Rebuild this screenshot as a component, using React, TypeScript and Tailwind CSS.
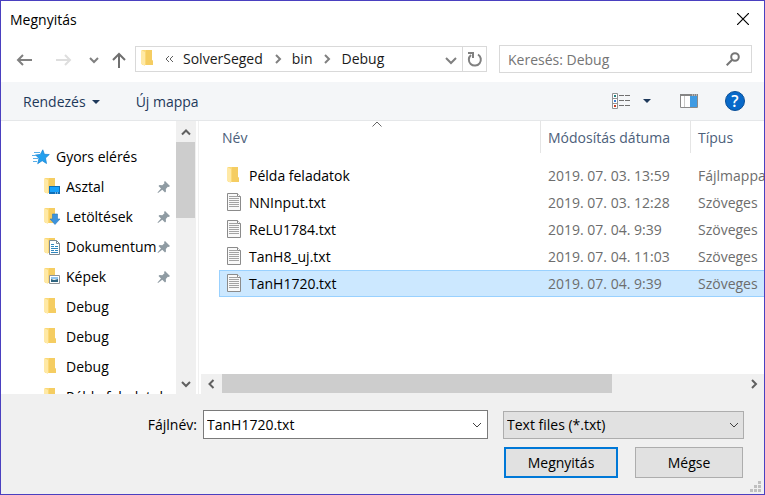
import React from 'react';

type Overlay = 'desktop' | 'download' | 'document' | 'picture' | 'none';

const places: { name: string; overlay: Overlay }[] = [
  { name: 'Asztal', overlay: 'desktop' },
  { name: 'Letöltések', overlay: 'download' },
  { name: 'Dokumentum', overlay: 'document' },
  { name: 'Képek', overlay: 'picture' },
  { name: 'Debug', overlay: 'none' },
  { name: 'Debug', overlay: 'none' },
  { name: 'Debug', overlay: 'none' },
  { name: 'Példa feladatok', overlay: 'none' },
];

const files = [
  { name: 'Példa feladatok', date: '2019. 07. 03. 13:59', type: 'Fájlmappa', folder: true },
  { name: 'NNInput.txt', date: '2019. 07. 03. 12:28', type: 'Szöveges' },
  { name: 'ReLU1784.txt', date: '2019. 07. 04. 9:39', type: 'Szöveges' },
  { name: 'TanH8_uj.txt', date: '2019. 07. 04. 11:03', type: 'Szöveges' },
  { name: 'TanH1720.txt', date: '2019. 07. 04. 9:39', type: 'Szöveges', selected: true },
];

function Folder({ overlay = 'none' }: { overlay?: Overlay }) {
  return (
    <svg width="18" height="18" viewBox="1 1 18 18" className="shrink-0" aria-hidden="true">
      <path d="M2 1h10v10l1 1v4H2z" fill="#fbd977" />
      <path d="M6 1h6v10l1 1v4H6z" fill="#f5cd62" />
      <path d="M1 1l4 2v14l-4-2z" fill="#ffe9a6" />
      {overlay === 'desktop' && (
        <>
          <path d="M6 9h11v8H6z" fill="#0f6fb8" />
          <path d="M7 10h9v5H7z" fill="#18a2fb" />
          <path d="M12 16h1M14 16h1" stroke="#d5ecfb" />
        </>
      )}
      {overlay === 'download' && (
        <path d="M9.500 7h5v5h2.500L12 17.500 7 12h2.500z" fill="#3c93dc" stroke="#2a78bd" strokeWidth=".6" />
      )}
      {overlay === 'document' && (
        <>
          <path d="M6.500 3.500h7l3 3v11h-10z" fill="#fff" stroke="#7d8a93" />
          <path d="M13.500 3.500v3h3" fill="none" stroke="#7d8a93" />
          <path d="M8 7.500h3M8 9.500h3M12 9.500h3M8 11.500h7M8 13.500h3M8 15.500h7M12 13.500h3" stroke="#3187bd" />
        </>
      )}
      {overlay === 'picture' && (
        <>
          <path d="M6.500 8.500h10v8h-10z" fill="#fff" stroke="#8e9498" />
          <path d="M8 10h7v2H8z" fill="#8fc4ee" />
          <path d="M8 12l3 1 4-1v3H8z" fill="#2e6580" />
        </>
      )}
    </svg>
  );
}

function TextFile() {
  return (
    <svg width="18" height="20" viewBox="0 0 18 20" className="shrink-0" aria-hidden="true">
      <path d="M.5.5h10l3 3v14H.5z" fill="#f9f9f9" stroke="#8b8b8b" />
      <path d="M10.500.5v3h3" fill="#fff" stroke="#8b8b8b" />
      <path d="M2 3.500h8M2 5.500h10M2 7.500h10M2 9.500h10M2 11.500h10M2 13.500h10" stroke="#a3a3a3" />
    </svg>
  );
}

function Pin() {
  return (
    <svg width="14" height="14" viewBox="0 0 14 14" className="shrink-0" aria-hidden="true">
      <path d="M8 1l5 5-1.200 1-1-.3-2 2.300.2 2.500L8 12.500 5.300 9.800 1 13l-.5-.5L4 8.500 1.500 6l1-1 2.800.2 2.200-2L7 2z" fill="#8f9ba3" />
    </svg>
  );
}

function QuickStar() {
  return (
    <svg width="18" height="16" viewBox="0 0 18 16" className="shrink-0" aria-hidden="true">
      <path d="M10.800.8l1.600 4.500 4.900.2-3.800 3.500 1 5.500-4.300-2.800-4.500 3 1.300-5.300L3.600 6l4.700-.6z" fill="#23a0ee" stroke="#1681d2" strokeWidth=".7" />
      <path d="M2 3.500h6M0 6.500h4M1 9.500h5M1 12.500h4" stroke="#58aee8" />
    </svg>
  );
}

type Dir = 'up' | 'down' | 'left' | 'right';
const chevrons: Record<Dir, string> = {
  up: 'M2 8.500L6 4.500l4 4',
  down: 'M2 4l4 4 4-4',
  left: 'M8.500 2l-4 4 4 4',
  right: 'M4 2l4 4-4 4',
};

function Chevron({ dir, className, weight = 2 }: { dir: Dir; className?: string; weight?: number }) {
  return (
    <svg width="12" height="12" viewBox="0 0 12 12" className={className} fill="none" stroke="currentColor" strokeWidth={weight} aria-hidden="true">
      <path d={chevrons[dir]} />
    </svg>
  );
}

function Crumb() {
  return (
    <svg width="12" height="12" viewBox="0 0 12 12" className="mr-2 ml-[9px]" fill="none" stroke="#808080" strokeWidth="2" aria-hidden="true">
      <path d="M4 2l4 4-4 4" />
    </svg>
  );
}

function Caret() {
  return (
    <svg width="8" height="4" viewBox="0 0 8 4" aria-hidden="true">
      <path d="M0 0h8L4 4z" fill="#1e395b" />
    </svg>
  );
}

function NavBar() {
  return (
    <nav className="flex h-[45px] items-center pr-3 pb-px pl-[15px] text-[#808080]">
      <button aria-label="Vissza" className="w-4 pt-0.5">
        <svg width="16" height="12" viewBox="0 0 16 12" fill="none" stroke="#808080" strokeWidth="2"><path d="M16 6H2M7 1L2 6l5 5" /></svg>
      </button>
      <button aria-label="Előre" className="ml-6 w-4 pt-0.5" disabled>
        <svg width="16" height="12" viewBox="0 0 16 12" fill="none" stroke="#dedede" strokeWidth="2"><path d="M0 6h14M9 1l5 5-5 5" /></svg>
      </button>
      <button aria-label="Legutóbbi helyek" className="ml-4 w-3 pt-0.5"><Chevron dir="down" /></button>
      <button aria-label="Fel" className="ml-[11px] w-4 pt-0.5">
        <svg width="16" height="16" viewBox="0 0 16 16" fill="none" stroke="#6f6f6f" strokeWidth="2"><path d="M8 16V2M2 8l6-6 6 6" /></svg>
      </button>
      <div className="ml-2 flex h-[26px] min-w-0 flex-1 items-center border border-[#d9d9d9] pl-[5px] text-[#1a1a1a]">
        <Folder />
        <button aria-label="Előző mappák" className="ml-[5px] w-3 text-[#606060]">
          <svg width="12" height="12" viewBox="0 0 12 12" fill="none" stroke="currentColor"><path d="M5 3L2 6l3 3M9 3L6 6l3 3" /></svg>
        </button>
        <button className="ml-[7px]">SolverSeged</button>
        <Crumb />
        <button>bin</button>
        <Crumb />
        <button>Debug</button>
        <button aria-label="Korábbi helyek" className="ml-auto pt-0.5 pr-[5px] text-[#808080]">
          <svg width="12" height="12" viewBox="0 0 12 12" fill="none" stroke="currentColor" strokeWidth="2"><path d="M1 4l5 5 5-5" /></svg>
        </button>
        <button aria-label="Frissítés" className="flex h-full w-6 items-center justify-center border-l border-[#d9d9d9]">
          <svg width="16" height="16" viewBox="0 0 16 16" fill="none" stroke="#808080" strokeWidth="2"><path d="M11 3.500a6 6 0 1 1-7 .5M1 2h5v5" /></svg>
        </button>
      </div>
      <label className="ml-3 flex h-7 w-[253px] items-center border border-[#d9d9d9] pr-[11px] pl-2">
        <input type="search" placeholder="Keresés: Debug" aria-label="Keresés: Debug" className="min-w-0 flex-1 bg-transparent pt-0.5 outline-none placeholder:text-[#757575]" />
        <svg width="14" height="14" viewBox="0 0 14 14" fill="none" stroke="#757575" strokeWidth="2" aria-hidden="true"><circle cx="9" cy="5" r="3.800" /><path d="M6.200 7.800L.7 13.300" /></svg>
      </label>
    </nav>
  );
}

function Toolbar() {
  return (
    <div className="flex h-[39px] items-center border-b border-[#e5e7e9] bg-[#f4f6f8] pr-[19px] pl-[22px] text-[#1e395b]">
      <button className="flex items-center gap-1.5 pt-0.5">Rendezés <Caret /></button>
      <button className="ml-9 pt-0.5">Új mappa</button>
      <button aria-label="Nézet" className="ml-auto">
        <svg width="18" height="16" viewBox="0 0 18 16" fill="none">
          <path d="M.5.5h5v15h-5zM.5 5.500h5M.5 10.500h5" fill="#fff" stroke="#929292" />
          <path d="M7 2.500h5M13 2.500h5M7 7.500h5M13 7.500h5M7 12.500h5M13 12.500h5" stroke="#707070" />
          <path d="M2 3h2" stroke="#258083" strokeWidth="2" />
          <path d="M2 8h2" stroke="#3d7fd4" strokeWidth="2" />
          <path d="M2 13h2" stroke="#c83c22" strokeWidth="2" />
        </svg>
      </button>
      <button aria-label="További nézetek" className="ml-[13px]"><Caret /></button>
      <button aria-label="Betekintő ablaktábla" className="ml-[29px]">
        <svg width="18" height="14" viewBox="0 0 18 14">
          <path d="M.5.5h17v13H.5z" fill="#fff" stroke="#8a8a8a" />
          <path d="M0 0h18v2H0z" fill="#858585" />
          <path d="M12 1h1M14 1h1M16 1h1" stroke="#e6e6e6" />
          <path d="M4.500 2v11" stroke="#c8c8c8" />
          <path d="M10 2h7v11h-7z" fill="#3f9be3" />
        </svg>
      </button>
      <button aria-label="Súgó" className="ml-[27px] flex size-5 items-center justify-center rounded-full border border-[#0a4f97] bg-[#0869c9] text-base font-semibold text-white">?</button>
    </div>
  );
}

function Sidebar() {
  return (
    <aside className="flex w-[198px] shrink-0 border-r border-[#f0f0f0]">
      <ul className="min-w-0 flex-1 overflow-hidden pt-[21px]">
        <li className="flex h-[30px] items-center gap-1.5 pl-[31px]"><QuickStar />Gyors elérés</li>
        {places.map((place, i) => (
          <li key={i} className="flex h-[30px] items-center pr-[5px] pl-[43px]">
            <Folder overlay={place.overlay} />
            <span className="ml-1 min-w-0 flex-1 overflow-hidden whitespace-nowrap">{place.name}</span>
            {place.overlay !== 'none' && <Pin />}
          </li>
        ))}
      </ul>
      <div className="mr-0.5 flex w-5 flex-col bg-[#f0f0f0] pr-px text-[#606060]">
        <button aria-label="Görgetés fel" className="flex h-[21px] items-center justify-center"><Chevron dir="up" /></button>
        <div className="h-[76px] bg-[#cdcdcd]" />
        <button aria-label="Görgetés le" className="mt-auto flex h-[21px] items-center justify-center"><Chevron dir="down" /></button>
      </div>
    </aside>
  );
}

function FileList() {
  return (
    <main className="flex min-w-0 flex-1 flex-col">
      <div className="relative min-h-0 flex-1 overflow-hidden pl-5">
        <svg width="10" height="6" viewBox="0 0 10 6" className="absolute top-0 left-[173px]" fill="none" stroke="#666" aria-hidden="true"><path d="M.5 5.500L5 1l4.500 4.500" /></svg>
        <table className="w-full table-fixed border-separate border-spacing-0 text-left whitespace-nowrap">
          <colgroup>
            <col />
            <col className="w-[150px]" />
            <col className="w-[74px]" />
          </colgroup>
          <thead className="text-[#4c607a]">
            <tr className="h-[41px] align-top">
              <th className="p-0 font-normal"><div className="flex h-8 items-center pt-0.5 pl-[3px]">Név</div></th>
              <th className="p-0 font-normal"><div className="flex h-8 items-center border-l border-[#e5e5e5] pt-0.5 pl-[7px]">Módosítás dátuma</div></th>
              <th className="p-0 font-normal"><div className="flex h-8 items-center border-l border-[#e5e5e5] pt-0.5 pl-[7px]">Típus</div></th>
            </tr>
          </thead>
          <tbody>
            {files.map((file) => {
              const line = file.selected ? 'border-y border-[#99d1ff]' : 'border-y border-transparent';
              return (
                <tr key={file.name} className={file.selected ? 'h-[27px] bg-[#cce8ff]' : 'h-[27px]'}>
                  <td className={`border-l p-0 ${line}`}>
                    <div className="flex items-center gap-1 pl-[7px]">
                      {file.folder ? <Folder /> : <TextFile />}
                      {file.name}
                    </div>
                  </td>
                  <td className={`p-0 pl-2 text-[#6d6d6d] ${line}`}>{file.date}</td>
                  <td className={`overflow-hidden p-0 pl-2 text-[#6d6d6d] ${line}`}>{file.type}</td>
                </tr>
              );
            })}
          </tbody>
        </table>
      </div>
      <div className="ml-0.5 flex h-5 shrink-0 items-center bg-[#f0f0f0] text-[#606060]">
        <button aria-label="Görgetés balra" className="flex w-[21px] justify-center pr-0.5"><Chevron dir="left" /></button>
        <div className="h-[19px] w-9/13 self-start bg-[#cdcdcd]" />
        <button aria-label="Görgetés jobbra" className="ml-auto flex w-[21px] justify-center"><Chevron dir="right" /></button>
      </div>
    </main>
  );
}

function Footer() {
  return (
    <footer className="relative bg-[#f0f0f0] pt-4 pr-5 pb-4">
      <div className="flex items-center">
        <label htmlFor="filename" className="w-[202px] shrink-0 pr-1.5 text-right">Fájlnév:</label>
        <div className="flex h-[29px] min-w-0 flex-1 items-center border border-[#7a7a7a] bg-white pr-1 pl-[3px]">
          <input id="filename" defaultValue="TanH1720.txt" className="min-w-0 flex-1 bg-transparent outline-none" />
          <Chevron dir="down" weight={1} className="text-[#404040]" />
        </div>
        <div className="relative ml-[15px] w-[241px] shrink-0">
          <select aria-label="Fájltípus" className="h-7 w-full appearance-none border border-[#adadad] bg-[#e1e1e1] pl-[3px] outline-none">
            <option>Text files (*.txt)</option>
          </select>
          <Chevron dir="down" weight={1} className="pointer-events-none absolute top-2 right-1 text-[#404040]" />
        </div>
      </div>
      <div className="mt-2 flex justify-end gap-[17px] pr-px">
        <button className="h-[31px] w-[114px] border-2 border-[#0078d7] bg-[#e1e1e1]">Megnyitás</button>
        <button className="h-[31px] w-[108px] border border-[#adadad] bg-[#e1e1e1]">Mégse</button>
      </div>
      <svg width="11" height="11" viewBox="0 0 11 11" className="absolute right-[3px] bottom-0.5" fill="#bfbfbf" aria-hidden="true">
        <path d="M8 0h3v3H8zM4 4h3v3H4zM8 4h3v3H8zM0 8h3v3H0zM4 8h3v3H4zM8 8h3v3H8z" />
      </svg>
    </footer>
  );
}

export default function App() {
  return (
    <div className="flex h-screen flex-col overflow-hidden border border-[#4a40c0] bg-white font-['Open_Sans','Noto_Sans',sans-serif] text-sm text-black">
      <header className="flex h-9 shrink-0 items-center justify-between pr-[15px] pl-[9px]">
        <h1 className="pt-0.5">Megnyitás</h1>
        <button aria-label="Bezárás">
          <svg width="12" height="12" viewBox="0 0 12 12" stroke="#000" strokeWidth="1.200"><path d="M0 0l12 12M12 0L0 12" /></svg>
        </button>
      </header>
      <NavBar />
      <Toolbar />
      <div className="flex min-h-0 flex-1">
        <Sidebar />
        <FileList />
      </div>
      <Footer />
    </div>
  );
}
